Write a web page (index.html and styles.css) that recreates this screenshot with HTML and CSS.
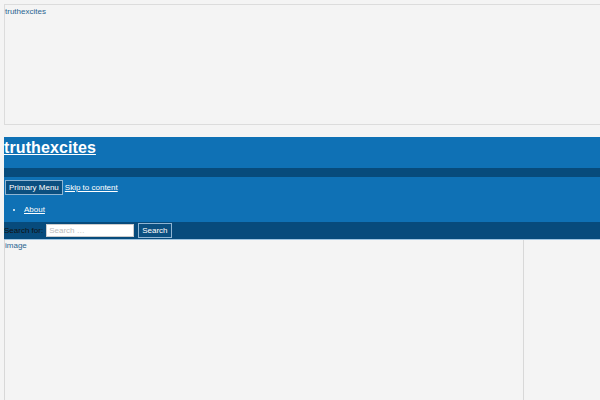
FILE: index.html
```html
<!DOCTYPE html>
<html>
<head>
<meta charset="utf-8">
<link rel="stylesheet" href="styles.css">
</head>
<body>
<div class="topbox"><span class="toptext">truthexcites</span></div>
<header class="header">
  <div class="brand"><a href="#" class="title">truthexcites</a></div>
  <div class="band"></div>
  <nav class="nav">
    <div class="navrow"><button class="menubtn">Primary Menu</button><a href="#" class="skip">Skip to content</a></div>
    <ul class="menu"><li><a href="#">About</a></li></ul>
  </nav>
  <form class="search"><label class="slabel">Search for:</label><input class="sinput" type="text" placeholder="Search …"><button class="sbtn" type="button">Search</button></form>
</header>
<div class="content">
  <div class="main"><span class="imgtext">image</span></div>
  <div class="side"></div>
</div>
</body>
</html>
```
FILE: styles.css
```css
html, body { margin: 0; padding: 0; }
body {
  background: #f4f4f4;
  font-family: "Liberation Sans", Arial, sans-serif;
  font-size: 8px;
  padding: 4px 0 0 4px;
  overflow: hidden;
  height: 396px;
}
.topbox {
  border: 1px solid #dcdcdc;
  border-right: none;
  padding: 1px 0 0 0;
  color: #2a6591;
  box-sizing: border-box;
  height: 121px;
}
.toptext { font-size: 8px; line-height: 11px; }
.header { margin-top: 12px; background: #0f71b5; }
.brand { height: 31px; padding: 0; }
.title {
  color: #fff;
  font-weight: bold;
  font-size: 16px;
  line-height: 22px;
  text-decoration: underline;
  letter-spacing: 0.1px;
}
.band { height: 9px; background: #074b7c; }
.nav { padding: 3px 0 0 1px; height: 42px; }
.navrow { display: flex; align-items: center; }
.menubtn {
  font-family: inherit;
  font-size: 8px;
  color: #fff;
  background: #0b4f80;
  border: 1px solid #8fb5d3;
  padding: 0 3px;
  height: 15px;
  margin: 0 2px 0 0;
}
.skip { color: #fff; font-size: 8px; text-decoration: underline; }
.menu { margin: 9px 0 0 0; padding: 0 0 0 19px; list-style: disc; color: #fff; }
.menu li { line-height: 11px; }
.menu a { color: #fff; text-decoration: underline; }
.search {
  background: #074b7c;
  height: 17px;
  display: flex;
  align-items: center;
  margin: 0;
  border-bottom: 1px solid #9fc4e0;
}
.slabel { color: #111; font-size: 8px; margin-right: 3px; }
.sinput {
  width: 88px;
  height: 13px;
  box-sizing: border-box;
  border: 1px solid #ccc;
  font-family: inherit;
  font-size: 8px;
  padding: 0 2px;
  margin: 0 4px 0 0;
}
.sinput::placeholder { color: #bbb; }
.sbtn {
  font-family: inherit;
  font-size: 8px;
  color: #fff;
  background: #0b4f80;
  border: 1px solid #8fb5d3;
  height: 15px;
  padding: 0 3px;
  margin: 0;
}
.content { display: flex; height: 170px; }
.main {
  width: 518px;
  border-left: 1px solid #d8d8d8;
  border-right: 1px solid #d8d8d8;
  color: #2a6591;
  padding: 1px 0 0 0;
}
.imgtext { line-height: 10px; }
.side { flex: 1; }
```
